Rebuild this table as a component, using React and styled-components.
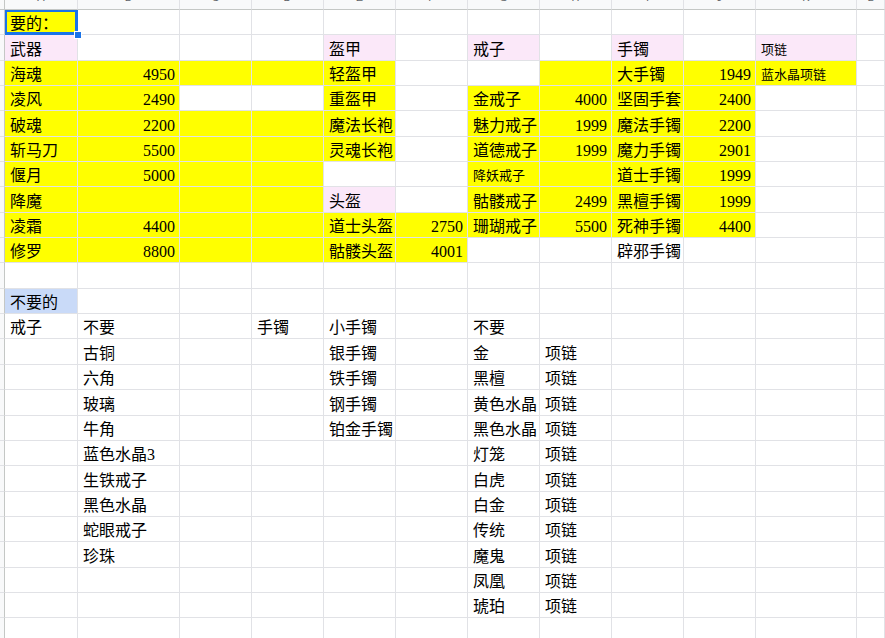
import React from "react";
import styled, { createGlobalStyle, css } from "styled-components";

const Global = createGlobalStyle`
  html, body { margin: 0; padding: 0; background: #ffffff; overflow: hidden; }
  #root { width: 885px; height: 638px; }
`;

const COLS = ["A", "B", "C", "D", "E", "F", "G", "H", "I", "J", "K", "L"];
const ROW_H = 25.35;

const Sheet = styled.div`
  display: grid;
  grid-template-columns: 5px 73px 102px 72px 72px 72px 72px 72px 72px 72px 72px 101px 1fr;
  grid-template-rows: 10px repeat(26, ${ROW_H}px);
  width: 885px;
  height: 638px;
  overflow: hidden;
  font-family: "Liberation Serif", "Noto Sans CJK SC", serif;
  color: #000;
`;

const Corner = styled.div`
  background: #f8f9fa;
  border-right: 1px solid #c4c7c5;
  border-bottom: 1px solid #c4c7c5;
  box-sizing: border-box;
`;

const ColHeader = styled.div`
  box-sizing: border-box;
  background: #f8f9fa;
  border-right: 1px solid #e1e2e6;
  border-bottom: 1px solid #c4c7c5;
  display: flex;
  align-items: flex-end;
  justify-content: center;
  overflow: hidden;
  font-family: "Liberation Sans", Arial, sans-serif;
  font-size: 11px;
  line-height: 11px;
  color: #5f6368;
  padding-bottom: 6px;
`;

const RowHeader = styled.div`
  box-sizing: border-box;
  background: #f8f9fa;
  border-right: 1px solid #c4c7c5;
  border-bottom: 1px solid #e1e2e6;
`;

const fills = {
  y: "#ffff00",
  p: "#fbe8f9",
  b: "#c9daf8",
};

const Cell = styled.div`
  position: relative;
  box-sizing: border-box;
  background: ${(p) => (p.$fill ? fills[p.$fill] : "#ffffff")};
  border-right: 1px solid #e1e2e6;
  border-bottom: 1px solid #e1e2e6;
  display: flex;
  align-items: flex-end;
  justify-content: ${(p) => (p.$num ? "flex-end" : "flex-start")};
  padding: 0 4px 1px 5px;
  white-space: nowrap;
  font-size: ${(p) => (p.$small ? "13px" : "16px")};
  line-height: 19px;
  ${(p) =>
    p.$small &&
    css`
      font-family: "Noto Sans CJK SC", sans-serif;
      padding-bottom: 2px;
    `}
  ${(p) =>
    p.$selected &&
    css`
      box-shadow: inset 0 0 0 2px #1a73e8;
      border-right-color: #1a73e8;
      border-bottom-color: #1a73e8;
      overflow: visible;
      z-index: 2;
    `}
`;

const Handle = styled.span`
  position: absolute;
  right: -5px;
  bottom: -5px;
  width: 6px;
  height: 6px;
  background: #1a73e8;
  border: 1px solid #ffffff;
  z-index: 3;
`;

// cell notation: "y:text", "p:text", "b:text", "y#:1234" (number), "y!:text" (small), "" empty, "y" fill only
const parse = (s) => {
  if (!s) return {};
  const i = s.indexOf(":");
  const tag = i === -1 ? s : s.slice(0, i);
  const text = i === -1 ? "" : s.slice(i + 1);
  const fill = /[ypb]/.exec(tag);
  return {
    fill: fill ? fill[0] : null,
    num: tag.includes("#"),
    small: tag.includes("!"),
    text,
  };
};

const ROWS = [
  ["y:要的："],
  ["p:武器", "", "", "", "p:盔甲", "", "p:戒子", "", "p:手镯", "", "p!:项链"],
  ["y:海魂", "y#:4950", "y", "y", "y:轻盔甲", "", "", "y", "y:大手镯", "y#:1949", "y!:蓝水晶项链"],
  ["y:凌风", "y#:2490", "", "", "y:重盔甲", "", "y:金戒子", "y#:4000", "y:坚固手套", "y#:2400"],
  ["y:破魂", "y#:2200", "y", "y", "y:魔法长袍", "", "y:魅力戒子", "y#:1999", "y:魔法手镯", "y#:2200"],
  ["y:斩马刀", "y#:5500", "y", "y", "y:灵魂长袍", "", "y:道德戒子", "y#:1999", "y:魔力手镯", "y#:2901"],
  ["y:偃月", "y#:5000", "y", "y", "", "", "y!:降妖戒子", "y", "y:道士手镯", "y#:1999"],
  ["y:降魔", "y", "y", "y", "p:头盔", "", "y:骷髅戒子", "y#:2499", "y:黑檀手镯", "y#:1999"],
  ["y:凌霜", "y#:4400", "y", "y", "y:道士头盔", "y#:2750", "y:珊瑚戒子", "y#:5500", "y:死神手镯", "y#:4400"],
  ["y:修罗", "y#:8800", "y", "y", "y:骷髅头盔", "y#:4001", "", "", "-:辟邪手镯"],
  [],
  ["b:不要的"],
  ["-:戒子", "-:不要", "", "-:手镯", "-:小手镯", "", "-:不要"],
  ["", "-:古铜", "", "", "-:银手镯", "", "-:金", "-:项链"],
  ["", "-:六角", "", "", "-:铁手镯", "", "-:黑檀", "-:项链"],
  ["", "-:玻璃", "", "", "-:钢手镯", "", "-:黄色水晶", "-:项链"],
  ["", "-:牛角", "", "", "-:铂金手镯", "", "-:黑色水晶", "-:项链"],
  ["", "-:蓝色水晶3", "", "", "", "", "-:灯笼", "-:项链"],
  ["", "-:生铁戒子", "", "", "", "", "-:白虎", "-:项链"],
  ["", "-:黑色水晶", "", "", "", "", "-:白金", "-:项链"],
  ["", "-:蛇眼戒子", "", "", "", "", "-:传统", "-:项链"],
  ["", "-:珍珠", "", "", "", "", "-:魔鬼", "-:项链"],
  ["", "", "", "", "", "", "-:凤凰", "-:项链"],
  ["", "", "", "", "", "", "-:琥珀", "-:项链"],
  [],
  [],
];

export default function App() {
  return (
    <>
      <Global />
      <Sheet>
        <Corner />
        {COLS.map((c) => (
          <ColHeader key={c}>{c}</ColHeader>
        ))}
        {ROWS.map((row, r) => (
          <React.Fragment key={r}>
            <RowHeader />
            {COLS.map((c, ci) => {
              const d = parse(row[ci]);
              const selected = r === 0 && ci === 0;
              return (
                <Cell
                  key={c}
                  $fill={d.fill}
                  $num={d.num}
                  $small={d.small}
                  $selected={selected}
                >
                  {d.text}
                  {selected && <Handle />}
                </Cell>
              );
            })}
          </React.Fragment>
        ))}
      </Sheet>
    </>
  );
}
